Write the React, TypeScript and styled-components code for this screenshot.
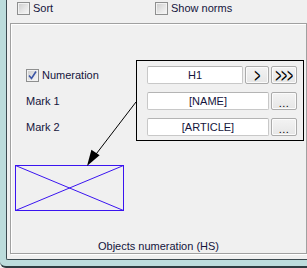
import styled, { createGlobalStyle } from 'styled-components'

const GlobalStyle = createGlobalStyle`
  html, body {
    margin: 0;
    padding: 0;
    background: #f0f0f0;
  }
  body {
    font-family: 'Liberation Sans', Arial, sans-serif;
    font-size: 11px;
    color: #000;
  }
`

const Window = styled.div`
  width: 307px;
  height: 268px;
  box-sizing: border-box;
  padding: 0 0 6px 6px;
  background: #bcdcdc;
  border-bottom: 2px solid #2e3c40;
  border-bottom-left-radius: 6px;
  display: flex;
`

const Client = styled.div`
  flex: 1;
  display: flex;
  flex-direction: column;
  background: #f0f0f0;
  border-left: 1px solid #3c4a50;
  border-bottom: 1px solid #3c4a50;
  border-bottom-left-radius: 2px;
  padding: 0 0 5px 3px;
`

const TopRow = styled.div`
  height: 23px;
  box-sizing: border-box;
  padding: 2px 0 0 7px;
  display: grid;
  grid-template-columns: 138px 1fr;
  align-items: start;
`

const CheckLabel = styled.label`
  display: flex;
  align-items: center;
  gap: 3px;
  height: 13px;
  line-height: 13px;
  color: #14143c;
  white-space: nowrap;
`

const Box = styled.span`
  width: 13px;
  height: 13px;
  box-sizing: border-box;
  flex: none;
  border: 1px solid #8e8f8f;
  background: linear-gradient(135deg, #cbcbcb 0%, #e6e6e6 55%, #f8f8f8 100%);
  box-shadow: inset 0 0 0 1px #f2f2f2;
  display: flex;
  align-items: center;
  justify-content: center;
`

const Group = styled.div`
  position: relative;
  flex: 1;
  display: flex;
  flex-direction: column;
  border: 1px solid #a0a0a0;
  box-shadow: 1px 1px 0 #fff, inset 1px 1px 0 #fff;
  padding: 36px 0 0 4px;
`

const Panel = styled.div`
  display: grid;
  grid-template-columns: 121px 168px;
`

const Labels = styled.div`
  padding: 6px 0 0 11px;
  display: grid;
  grid-auto-rows: 18px;
  row-gap: 8px;
  align-items: center;
`

const Label = styled.span`
  color: #14143c;
`

const Frame = styled.div`
  border: 1px solid #000;
  padding: 5px 6px 4px 10px;
  display: grid;
  grid-auto-rows: 18px;
  row-gap: 8px;
`

const Row = styled.div`
  display: flex;
  gap: 2px;
`

const Field = styled.div`
  flex: 1;
  box-sizing: border-box;
  height: 18px;
  background: #fff;
  border: 1px solid #c8c8c8;
  border-top-color: #b4b4b4;
  border-radius: 2px;
  text-align: center;
  line-height: 16px;
  color: #14143c;
`

const Button = styled.div<{ $w: number }>`
  width: ${({ $w }) => $w}px;
  box-sizing: border-box;
  height: 18px;
  border: 1px solid #ababab;
  border-radius: 2px;
  background: linear-gradient(#f3f3f3, #e6e6e6);
  box-shadow: inset 0 0 0 1px #fbfbfb;
  display: flex;
  align-items: center;
  justify-content: center;
  color: #000;
`

const Chevron = styled.span<{ $many?: boolean }>`
  font-family: 'DejaVu Sans', sans-serif;
  font-size: 20px;
  letter-spacing: ${({ $many }) => ($many ? '-2px' : '0')};
  padding-right: ${({ $many }) => ($many ? '2px' : '0')};
  transform: scaleX(0.4);
  line-height: 16px;
  white-space: nowrap;
`

const Dots = styled.span`
  line-height: 16px;
  padding-top: 3px;
  letter-spacing: 0.5px;
`

const Preview = styled.svg`
  display: block;
  margin: 24px 0 0 0;
`

const Connector = styled.svg`
  position: absolute;
  left: 0;
  top: 0;
  pointer-events: none;
`

const Caption = styled.div`
  margin-top: auto;
  text-align: center;
  line-height: 13px;
  padding: 0 4px 0 0;
  color: #14143c;
`

const Check = () => (
  <svg width='9' height='9' viewBox='0 0 9 9'>
    <path d='M1 4.5 L3.5 7.5 L8 0.5' fill='none' stroke='#3d56a6' strokeWidth='1.6' />
  </svg>
)

export default function App() {
  return (
    <>
      <GlobalStyle />
      <Window>
        <Client>
          <TopRow>
            <CheckLabel>
              <Box />
              Sort
            </CheckLabel>
            <CheckLabel>
              <Box />
              Show norms
            </CheckLabel>
          </TopRow>
          <Group>
            <Panel>
              <Labels>
                <CheckLabel>
                  <Box>
                    <Check />
                  </Box>
                  Numeration
                </CheckLabel>
                <Label>Mark 1</Label>
                <Label>Mark 2</Label>
              </Labels>
              <Frame>
                <Row>
                  <Field>H1</Field>
                  <Button $w={24}>
                    <Chevron>&gt;</Chevron>
                  </Button>
                  <Button $w={26}>
                    <Chevron $many>&gt;&gt;&gt;</Chevron>
                  </Button>
                </Row>
                <Row>
                  <Field>[NAME]</Field>
                  <Button $w={26}>
                    <Dots>...</Dots>
                  </Button>
                </Row>
                <Row>
                  <Field>[ARTICLE]</Field>
                  <Button $w={26}>
                    <Dots>...</Dots>
                  </Button>
                </Row>
              </Frame>
            </Panel>
            <Preview width='109' height='46' viewBox='0 0 109 46'>
              <g stroke='#3a14f0' strokeWidth='1' fill='none'>
                <rect x='0.5' y='0.5' width='108' height='45' />
                <line x1='0.5' y1='0.5' x2='108.5' y2='45.5' />
                <line x1='0.5' y1='45.5' x2='108.5' y2='0.5' />
              </g>
            </Preview>
            <Caption>Objects numeration (HS)</Caption>
            <Connector width='130' height='150' viewBox='0 0 130 150'>
              <line x1='125' y1='78' x2='84' y2='131.5' stroke='#000' strokeWidth='1' />
              <polygon points='76,142 80.4,125.8 88.6,131.2' fill='#000' />
            </Connector>
          </Group>
        </Client>
      </Window>
    </>
  )
}
